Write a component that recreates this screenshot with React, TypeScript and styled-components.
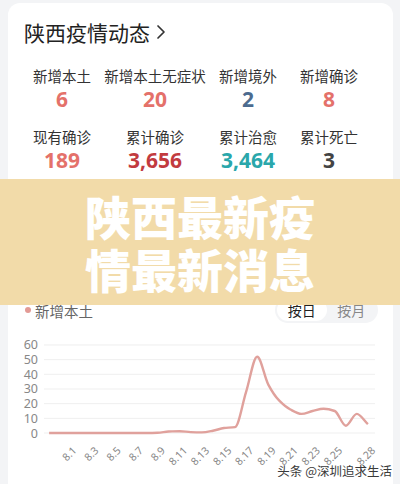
import React from "react";
import styled, { createGlobalStyle } from "styled-components";

const Global = createGlobalStyle`
  html, body { margin: 0; padding: 0; background: #f3f4f6; }
  body { font-family: "Noto Sans", "Noto Sans CJK SC", sans-serif; }
  * { box-sizing: border-box; }
`;

const Page = styled.div`
  position: relative;
  width: 400px;
  height: 484px;
  overflow: hidden;
  background: #f3f4f6;
  padding: 3px 7px 0 8px;
`;

const Card = styled.div`
  background: #fff;
  border-radius: 12px;
  padding: 15px 0 40px 0;
  min-height: 520px;
`;

const TitleRow = styled.div`
  display: flex;
  align-items: center;
  gap: 6px;
  padding-left: 16px;
  height: 28px;
  font-family: "Noto Sans CJK SC", sans-serif;
  font-size: 21px;
  line-height: 28px;
  color: #222;
`;

const StatsGrid = styled.div`
  display: grid;
  grid-template-columns: 76px 110px 76px 86px;
  row-gap: 14px;
  padding-left: 16px;
  margin-top: 20px;
`;

const Stat = styled.div`
  display: flex;
  flex-direction: column;
  align-items: center;
`;

const Label = styled.div`
  font-family: "Noto Sans CJK SC", sans-serif;
  font-size: 14.5px;
  line-height: 20px;
  color: #333;
  white-space: nowrap;
`;

const Num = styled.div<{ $c: string }>`
  font-family: "Noto Sans", "Roboto", sans-serif;
  font-weight: 700;
  font-size: 21px;
  line-height: 27px;
  color: ${(p) => p.$c};
`;

const ChartHead = styled.div`
  display: flex;
  align-items: center;
  justify-content: space-between;
  margin-top: 123px;
  padding: 0 15px 0 17px;
  height: 26px;
`;

const Legend = styled.div`
  display: flex;
  align-items: center;
  gap: 4px;
  font-family: "Noto Sans CJK SC", sans-serif;
  font-size: 14.5px;
  color: #666;
`;

const Dot = styled.span`
  width: 6px;
  height: 6px;
  border-radius: 50%;
  background: #e39a95;
`;

const Toggle = styled.div`
  display: flex;
  background: #f3f4f6;
  border-radius: 13px;
  padding: 2px;
  height: 26px;
  width: 103px;
`;

const ToggleBtn = styled.div<{ $on?: boolean }>`
  flex: 1;
  display: flex;
  align-items: center;
  justify-content: center;
  border-radius: 11px;
  background: ${(p) => (p.$on ? "#fff" : "transparent")};
  color: ${(p) => (p.$on ? "#222" : "#888")};
  font-family: "Noto Sans CJK SC", sans-serif;
  font-size: 14px;
`;

const ChartSvg = styled.svg`
  display: block;
  margin-top: 8px;
`;

const Band = styled.div`
  position: absolute;
  left: 0;
  right: 0;
  top: 179px;
  height: 126px;
  background: #f2dba9;
  display: flex;
  flex-direction: column;
  align-items: center;
  justify-content: center;
  color: #fff;
  font-family: "Noto Sans CJK SC", sans-serif;
  font-weight: 900;
  font-size: 46px;
  line-height: 53px;
  text-align: center;
`;

const Watermark = styled.div`
  position: absolute;
  right: 8px;
  bottom: 4px;
  font-family: "Noto Sans CJK SC", sans-serif;
  font-size: 12.5px;
  color: #3a3a3a;
  text-shadow: 0 0 2px #fff, 0 0 2px #fff;
`;

const stats = [
  { l: "新增本土", v: "6", c: "#e4716a" },
  { l: "新增本土无症状", v: "20", c: "#e4716a" },
  { l: "新增境外", v: "2", c: "#4c6b8f" },
  { l: "新增确诊", v: "8", c: "#e4716a" },
  { l: "现有确诊", v: "189", c: "#e4716a" },
  { l: "累计确诊", v: "3,656", c: "#c23b3f" },
  { l: "累计治愈", v: "3,464", c: "#2aa7ab" },
  { l: "累计死亡", v: "3", c: "#444" },
];

// chart geometry (svg coords relative to card left = page x - 8, top = page y 330)
const X0 = 8;
const Y0 = 330;
const yOf = (v: number) => 432 - Y0 - (v / 10) * 14.67;
const xOf = (d: number) => 69 - X0 + (d - 1) * 11.07;

const values: [number, number][] = [
  [-0.8, 0], [0, 0], [1, 0], [2, 0], [3, 0], [4, 0], [5, 0], [6, 0], [7, 0], [8, 0],
  [9, 0.2], [10, 1], [11, 1.2], [12, 0.6], [13, 0.4], [14, 1.5], [15, 3.4], [16, 4],
  [17, 28], [18, 52], [19, 33], [20, 22], [21, 16], [22, 13], [23, 15], [24, 16.5],
  [25, 15], [26, 5], [27, 13], [28, 6],
];

function monotonePath(pts: [number, number][]) {
  const n = pts.length;
  const dx: number[] = [];
  const m: number[] = [];
  for (let i = 0; i < n - 1; i++) {
    dx.push(pts[i + 1][0] - pts[i][0]);
    m.push((pts[i + 1][1] - pts[i][1]) / dx[i]);
  }
  const t: number[] = new Array(n).fill(0);
  t[0] = m[0];
  t[n - 1] = m[n - 2];
  for (let i = 1; i < n - 1; i++) {
    if (m[i - 1] * m[i] <= 0) t[i] = 0;
    else {
      const w1 = 2 * dx[i] + dx[i - 1];
      const w2 = dx[i] + 2 * dx[i - 1];
      t[i] = (w1 + w2) / (w1 / m[i - 1] + w2 / m[i]);
    }
  }
  let d = `M${pts[0][0].toFixed(1)},${pts[0][1].toFixed(1)}`;
  for (let i = 0; i < n - 1; i++) {
    const h = dx[i] / 3;
    const c1x = pts[i][0] + h;
    const c1y = pts[i][1] + t[i] * h;
    const c2x = pts[i + 1][0] - h;
    const c2y = pts[i + 1][1] - t[i + 1] * h;
    d += ` C${c1x.toFixed(1)},${c1y.toFixed(1)} ${c2x.toFixed(1)},${c2y.toFixed(1)} ${pts[i + 1][0].toFixed(1)},${pts[i + 1][1].toFixed(1)}`;
  }
  return d;
}

const linePts: [number, number][] = values.map(([d, v]) => [xOf(d), yOf(v)]);
const xLabels = [1, 3, 5, 7, 9, 11, 13, 15, 17, 19, 21, 23, 25, 28];

function Chart() {
  return (
    <ChartSvg width={385} height={140} viewBox="0 0 385 140">
      {[60, 50, 40, 30, 20, 10, 0].map((v) => (
        <g key={v}>
          <line x1={44 - X0} x2={375 - X0} y1={yOf(v)} y2={yOf(v)} stroke="#efefef" strokeWidth={1} />
          <text
            x={38 - X0}
            y={yOf(v) + 4.5}
            textAnchor="end"
            fontSize={12.5}
            fill="#888"
            fontFamily="Noto Sans, sans-serif"
          >
            {v}
          </text>
        </g>
      ))}
      <path d={monotonePath(linePts)} fill="none" stroke="#e0a19c" strokeWidth={2.4} strokeLinejoin="round" />
      {xLabels.map((d) => {
        const x = xOf(d) + 2;
        const y = 444 - Y0;
        return (
          <text
            key={d}
            x={x}
            y={y}
            textAnchor="end"
            fontSize={10.5}
            fill="#888"
            fontFamily="Noto Sans, sans-serif"
            transform={`rotate(-45 ${x} ${y})`}
            dominantBaseline="hanging"
          >
            {`8.${d}`}
          </text>
        );
      })}
    </ChartSvg>
  );
}

export default function App() {
  return (
    <>
      <Global />
      <Page>
        <Card>
          <TitleRow>
            陕西疫情动态
            <svg width="10" height="16" viewBox="0 0 10 16">
              <polyline points="2,2 8,8 2,14" fill="none" stroke="#333" strokeWidth="1.7" strokeLinecap="round" strokeLinejoin="round" />
            </svg>
          </TitleRow>
          <StatsGrid>
            {stats.map((s) => (
              <Stat key={s.l}>
                <Label>{s.l}</Label>
                <Num $c={s.c}>{s.v}</Num>
              </Stat>
            ))}
          </StatsGrid>
          <ChartHead>
            <Legend>
              <Dot />
              新增本土
            </Legend>
            <Toggle>
              <ToggleBtn $on>按日</ToggleBtn>
              <ToggleBtn>按月</ToggleBtn>
            </Toggle>
          </ChartHead>
          <Chart />
        </Card>
        <Band>
          <div>陕西最新疫</div>
          <div>情最新消息</div>
        </Band>
        <Watermark>头条 @深圳追求生活</Watermark>
      </Page>
    </>
  );
}
